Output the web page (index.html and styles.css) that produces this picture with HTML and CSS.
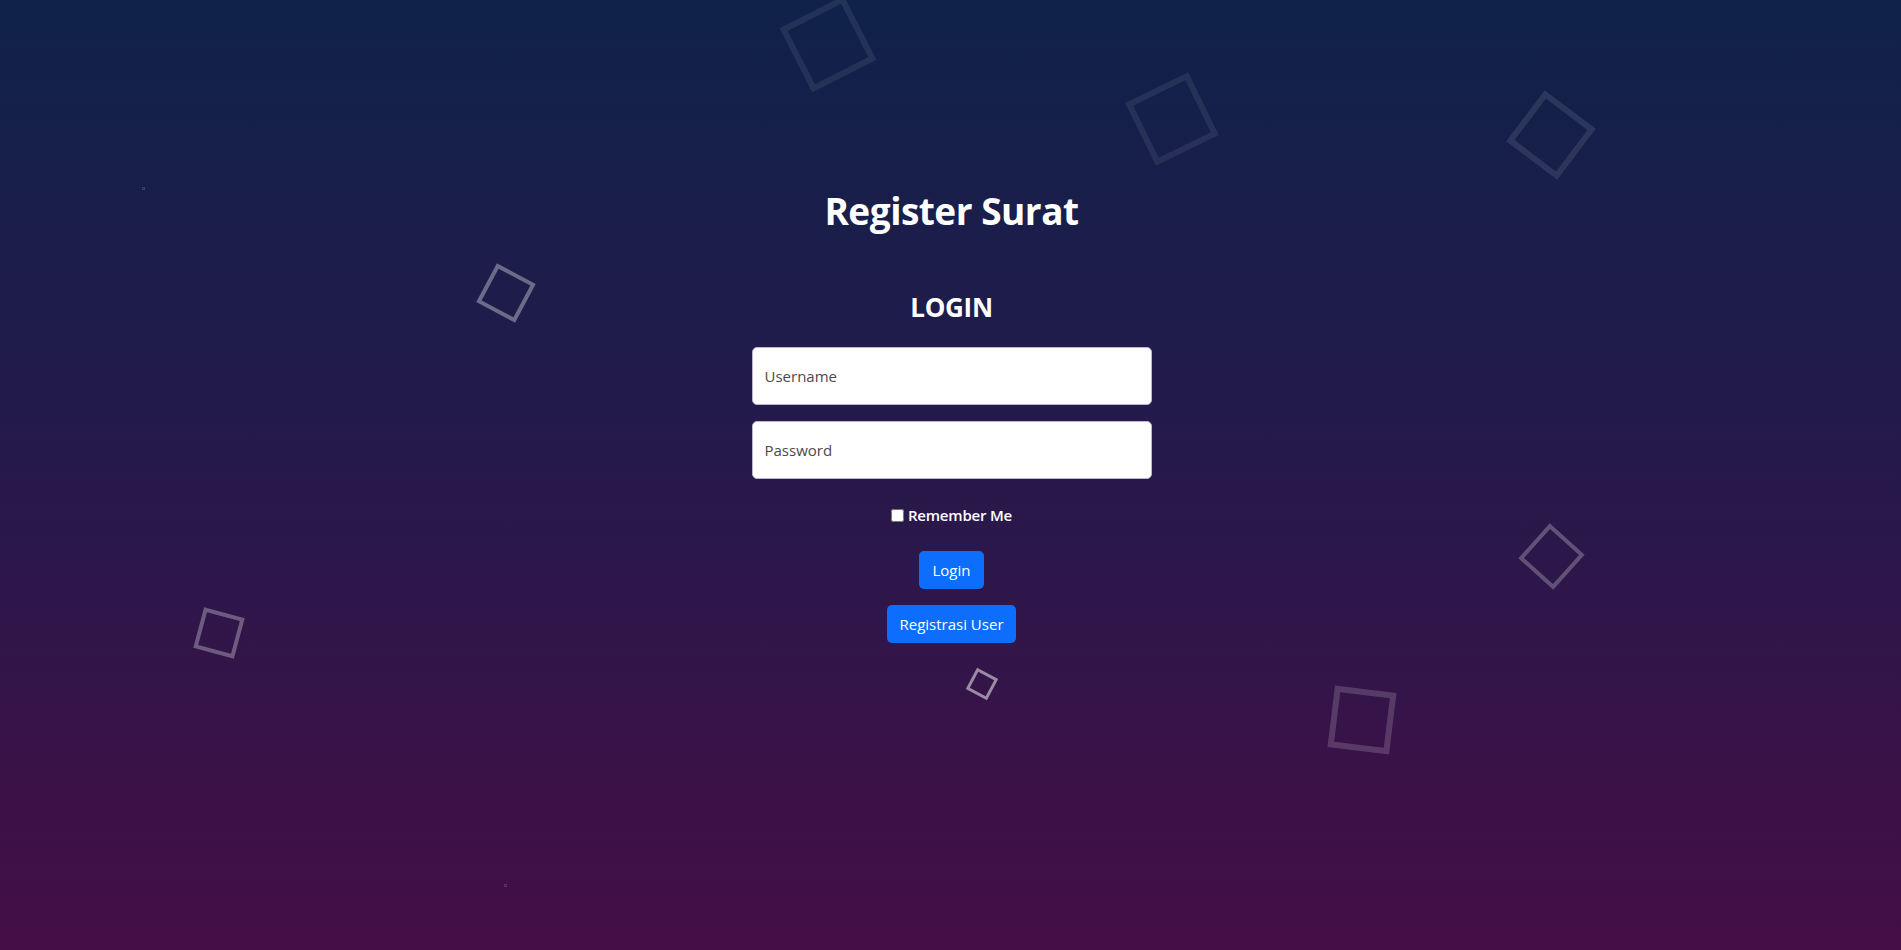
FILE: index.html
```html
<!DOCTYPE html>
<html lang="id">
<head>
<meta charset="utf-8">
<title>Register Surat - Login</title>
<link rel="stylesheet" href="styles.css">
</head>
<body>
<ul class="squares">
  <li class="sq sq1"></li>
  <li class="sq sq2"></li>
  <li class="sq sq3"></li>
  <li class="sq sq4"></li>
  <li class="sq sq5"></li>
  <li class="sq sq6"></li>
  <li class="sq sq7"></li>
  <li class="sq sq8"></li>
  <li class="sq sq9"></li>
  <li class="sq sq10"></li>
</ul>
<main class="wrap">
  <h1 class="title">Register Surat</h1>
  <h2 class="subtitle">LOGIN</h2>
  <form class="login-form">
    <input class="field" type="text" placeholder="Username">
    <input class="field" type="password" placeholder="Password">
    <label class="remember"><input class="check" type="checkbox"> Remember Me</label>
    <button class="btn btn-login" type="button">Login</button>
    <button class="btn" type="button">Registrasi User</button>
  </form>
</main>
</body>
</html>
```
FILE: styles.css
```css
html, body {
  margin: 0;
  padding: 0;
  height: 100%;
}
body {
  background: linear-gradient(to bottom, #0f2249 0%, #241a4b 45%, #450e47 100%);
  font-family: "Open Sans", "Noto Sans", sans-serif;
  color: #fff;
  overflow: hidden;
  position: relative;
}
.squares {
  list-style: none;
  margin: 0;
  padding: 0;
  position: absolute;
  inset: 0;
  pointer-events: none;
}
.sq {
  position: absolute;
  box-sizing: border-box;
  border-style: solid;
  border-color: rgba(255, 255, 255, 0.08);
}
.sq1 { left: 792px; top: 8px; width: 72px; height: 72px; border-width: 6px; transform: rotate(-27deg); }
.sq2 { left: 1137px; top: 84px; width: 70px; height: 70px; border-width: 6px; transform: rotate(-26deg); }
.sq3 { left: 1519px; top: 103px; width: 64px; height: 64px; border-width: 6px; transform: rotate(37deg); border-color: rgba(255,255,255,0.1); }
.sq4 { left: 484px; top: 271px; width: 44px; height: 44px; border-width: 4px; transform: rotate(28deg); border-color: rgba(255,255,255,0.35); }
.sq5 { left: 198px; top: 612px; width: 42px; height: 42px; border-width: 4px; transform: rotate(15deg); border-color: rgba(255,255,255,0.3); }
.sq6 { left: 1528px; top: 533px; width: 47px; height: 47px; border-width: 4px; transform: rotate(42deg); border-color: rgba(255,255,255,0.25); }
.sq7 { left: 1331px; top: 689px; width: 62px; height: 62px; border-width: 6px; transform: rotate(7deg); border-color: rgba(255,255,255,0.17); }
.sq8 { left: 970px; top: 672px; width: 24px; height: 24px; border-width: 3px; transform: rotate(28deg); border-color: rgba(255,255,255,0.5); }
.sq9 { left: 142px; top: 187px; width: 3px; height: 3px; border-width: 1px; border-color: rgba(255,255,255,0.15); }
.sq10 { left: 504px; top: 884px; width: 3px; height: 3px; border-width: 1px; border-color: rgba(255,255,255,0.15); }

.wrap {
  position: relative;
  padding-top: 187px;
  padding-left: 2px;
  display: flex;
  flex-direction: column;
  align-items: center;
  text-align: center;
}
.title {
  margin: 0;
  font-size: 37px;
  font-weight: 700;
  line-height: 48px;
  letter-spacing: -0.5px;
}
.subtitle {
  margin: 55px 0 0;
  font-size: 26px;
  font-weight: 700;
  line-height: 34px;
  letter-spacing: -0.3px;
}
.login-form {
  margin-top: 23px;
  display: flex;
  flex-direction: column;
  align-items: center;
}
.field {
  box-sizing: border-box;
  width: 400px;
  height: 58px;
  margin: 0 0 16px;
  padding: 0 12px;
  border: 1px solid #b8b4d6;
  border-radius: 5px;
  background: #fff;
  font-family: inherit;
  font-size: 15px;
  color: #212529;
}
.field::placeholder {
  color: #4a4a4a;
}
.remember {
  margin-top: 8px;
  display: flex;
  align-items: center;
  gap: 4px;
  font-size: 15px;
  font-weight: 600;
  line-height: 24px;
  height: 24px;
  letter-spacing: -0.2px;
}
.check {
  margin: 0;
  width: 13px;
  height: 13px;
}
.btn {
  margin-top: 24px;
  height: 38px;
  padding: 0 12px;
  border: 0;
  border-radius: 5px;
  background: #0d6efd;
  color: #fff;
  font-family: inherit;
  font-size: 15px;
  font-weight: 500;
  line-height: 38px;
}
.btn-login {
  padding: 0 14px;
}
.btn + .btn {
  margin-top: 16px;
}
```
